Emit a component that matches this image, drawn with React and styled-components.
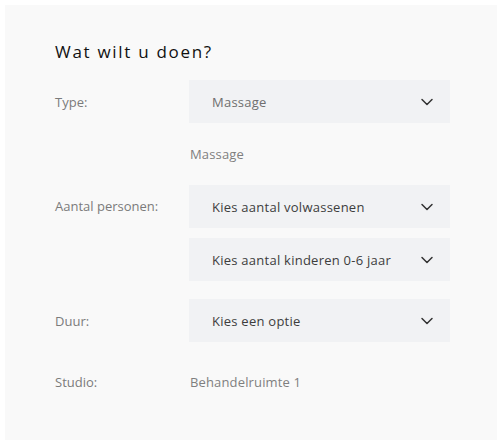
import React from "react";
import styled, { createGlobalStyle } from "styled-components";

const GlobalStyle = createGlobalStyle`
  html, body {
    margin: 0;
    padding: 0;
    background: #ffffff;
  }
  body {
    font-family: "Open Sans", "Liberation Sans", sans-serif;
  }
`;

const Page = styled.div`
  padding: 5px 5px 1px 5px;
`;

const Panel = styled.section`
  background: #f9f9f9;
  padding: 35px 50px 37px 50px;
  box-sizing: border-box;
  height: 435px;
`;

const Heading = styled.h2`
  margin: 0 0 16px 0;
  font-size: 17px;
  line-height: 24px;
  font-weight: 500;
  letter-spacing: 1.7px;
  color: #111;
`;

const Form = styled.div`
  display: flex;
  flex-direction: column;
  gap: 18px;
`;

const Row = styled.div`
  display: grid;
  grid-template-columns: 134px 261px;
  align-items: ${(p) => (p.$top ? "start" : "center")};
  min-height: ${(p) => (p.$tall ? "43px" : "26px")};
`;

const Label = styled.div`
  font-size: 13px;
  color: #7b7b7b;
  line-height: ${(p) => (p.$boxed ? "43px" : "26px")};
`;

const Fields = styled.div`
  display: flex;
  flex-direction: column;
  gap: 10px;
`;

const SelectBox = styled.div`
  display: flex;
  align-items: center;
  justify-content: space-between;
  height: 43px;
  padding: 0 13px 0 23px;
  background: #f1f2f4;
  box-sizing: border-box;
  font-size: 13px;
  letter-spacing: 0.25px;
  color: ${(p) => (p.$muted ? "#6f6f6f" : "#3d3d3d")};
  cursor: pointer;
`;

const Value = styled.div`
  font-size: 13px;
  letter-spacing: 0.15px;
  color: #7f7f7f;
  padding-left: 1px;
  line-height: 26px;
`;

const Chevron = () => (
  <svg width="20" height="20" viewBox="0 0 20 20" fill="none" stroke="#333" strokeWidth="1.5" strokeLinecap="round" strokeLinejoin="round">
    <path d="M5 7.5 10 12.5 15 7.5" />
  </svg>
);

const Select = ({ children, muted }) => (
  <SelectBox $muted={muted}>
    <span>{children}</span>
    <Chevron />
  </SelectBox>
);

export default function App() {
  return (
    <>
      <GlobalStyle />
      <Page>
        <Panel>
          <Heading>Wat wilt u doen?</Heading>
          <Form>
            <Row $tall>
              <Label>Type:</Label>
              <Select muted>Massage</Select>
            </Row>
            <Row>
              <div />
              <Value>Massage</Value>
            </Row>
            <Row $top>
              <Label $boxed>Aantal personen:</Label>
              <Fields>
                <Select>Kies aantal volwassenen</Select>
                <Select>Kies aantal kinderen 0-6 jaar</Select>
              </Fields>
            </Row>
            <Row $tall>
              <Label>Duur:</Label>
              <Select>Kies een optie</Select>
            </Row>
            <Row $tall>
              <Label>Studio:</Label>
              <Value>Behandelruimte 1</Value>
            </Row>
          </Form>
        </Panel>
      </Page>
    </>
  );
}
